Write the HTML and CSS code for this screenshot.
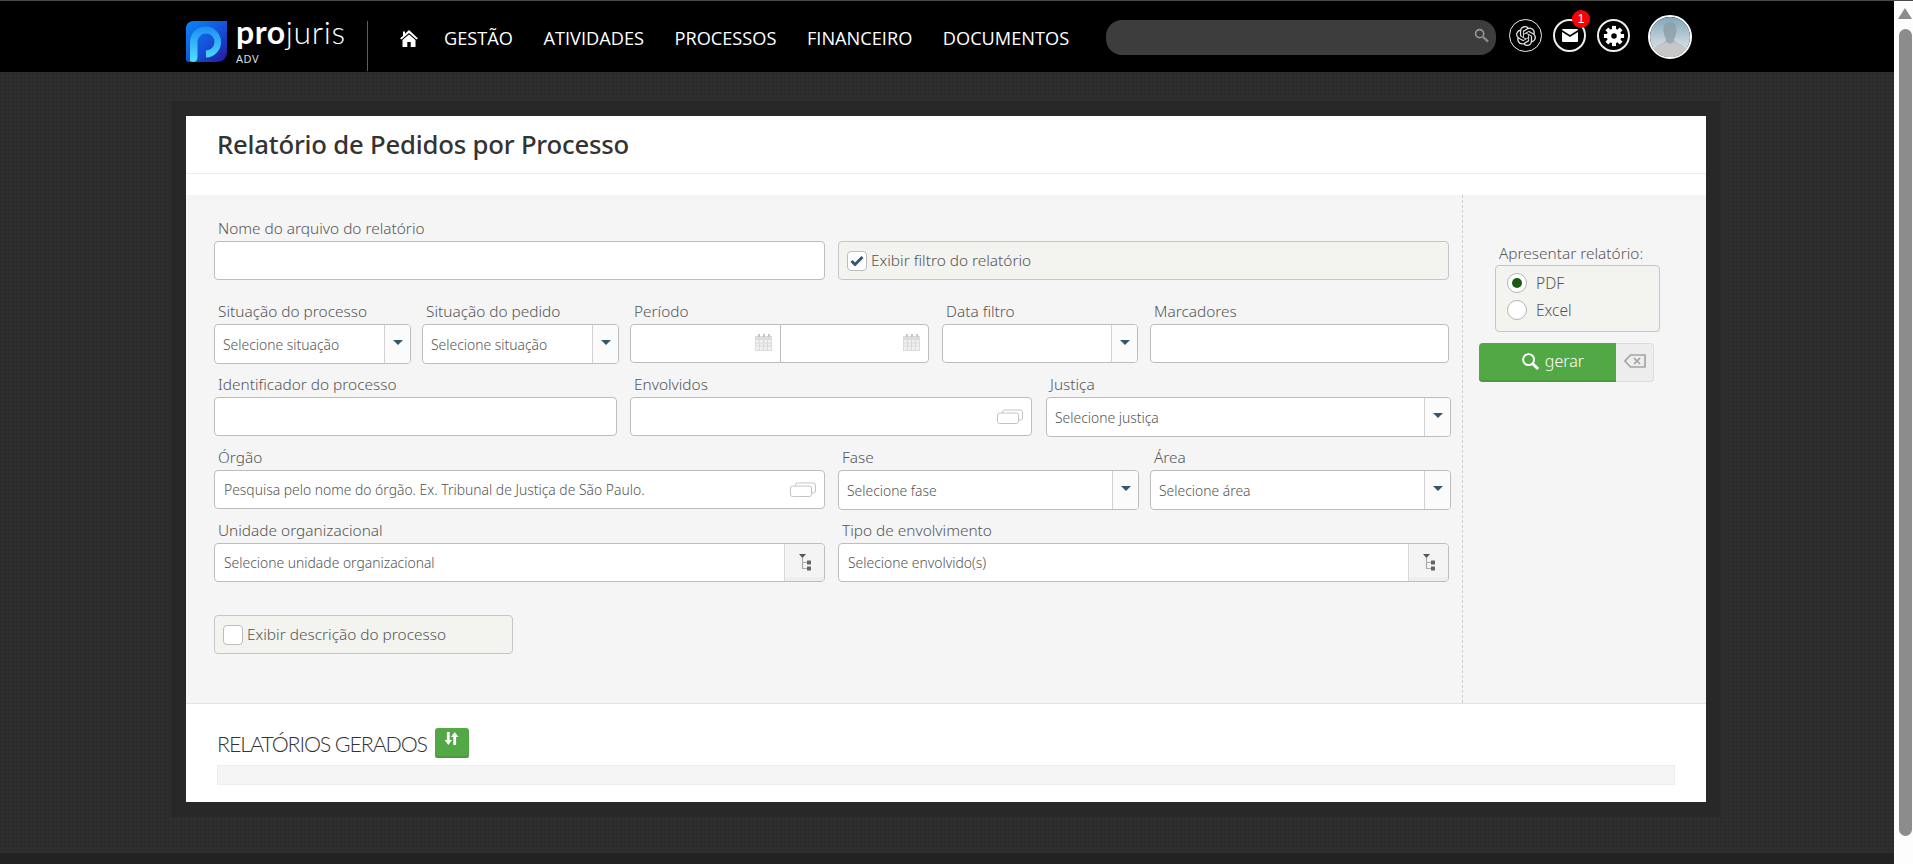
FILE: index.html
```html
<!DOCTYPE html>
<html lang="pt-BR">
<head>
<meta charset="utf-8">
<title>Relatório de Pedidos por Processo</title>
<link rel="stylesheet" href="styles.css">
</head>
<body>
<svg class="defs" width="0" height="0" aria-hidden="true">
  <defs>
    <g id="calicon">
      <rect x="0" y="2" width="17" height="15" fill="#dcdcdc"/>
      <rect x="1" y="6" width="15" height="10" fill="#f0f0f0"/>
      <path d="M1 9H16M1 12H16M4.500 6V16M8.500 6V16M12.500 6V16" stroke="#dadada" stroke-width="1"/>
      <rect x="3" y="0" width="2" height="3" fill="#c4c4c4"/><rect x="8" y="0" width="2" height="3" fill="#c4c4c4"/><rect x="13" y="0" width="2" height="3" fill="#c4c4c4"/>
    </g>
    <g id="cardsicon" fill="#fff" stroke="#c4c4c4" stroke-width="1">
      <rect x="5.500" y="1" width="20" height="10" rx="2"/>
      <rect x=".5" y="4" width="21" height="10.500" rx="2"/>
    </g>
    <g id="treeicon">
      <path d="M1 0H8L4.500 4Z" fill="#555"/>
      <path d="M4.500 4V14.500H9M4.500 8.500H9" fill="none" stroke="#aaa" stroke-width="1.200"/>
      <rect x="9" y="6.500" width="4" height="4" fill="#666"/>
      <rect x="9" y="12.500" width="4" height="4" fill="#666"/>
    </g>
  </defs>
</svg>
<div class="viewport">
  <div class="page">
    <header class="topbar">
      <a class="brand">
        <svg class="brand-mark" viewBox="0 0 41 41" width="41" height="41">
          <defs>
            <linearGradient id="lg1" x1="0" y1="0" x2="1" y2="1"><stop offset="0" stop-color="#0b86f6"/><stop offset=".55" stop-color="#1550d8"/><stop offset="1" stop-color="#2a149c"/></linearGradient>
            <linearGradient id="lg2" x1="0" y1="0" x2="0" y2="1"><stop offset="0" stop-color="#1d8cf2"/><stop offset="1" stop-color="#4fe2ff"/></linearGradient>
          </defs>
          <path d="M8 0H41V30Q41 41 30 41H3Q0 41 0 38V8Q0 0 8 0Z" fill="url(#lg1)"/>
          <path d="M4 40V21A15.500 15.500 0 1 1 20 36.500V29.500A8.500 8.500 0 1 0 11.500 21V36Q11.500 41 7 41Z" fill="url(#lg2)"/>
        </svg>
        <span class="brand-text"><span class="brand-name"><b>pro</b>juris</span><span class="brand-sub">ADV</span></span>
      </a>
      <nav class="nav">
        <svg class="home" viewBox="0 0 18 17" width="18" height="17"><path fill="#fff" d="M9 0 18 8.500 16.500 9.500 9 3 1.500 9.500 0 8.500 3 5.700V1.500H5V3.800Z"/><path fill="#fff" d="M9 4.500 15.500 10V17H10.700V12H7.300V17H2.500V10Z"/></svg>
        <a>GESTÃO</a><a>ATIVIDADES</a><a>PROCESSOS</a><a>FINANCEIRO</a><a>DOCUMENTOS</a>
      </nav>
      <div class="search">
        <svg viewBox="0 0 16 16" width="15" height="15"><circle cx="6" cy="6" r="4.300" fill="none" stroke="#9a9a9a" stroke-width="1.700"/><path d="M9.500 9.500 15 14.500" stroke="#8a8a8a" stroke-width="2.600"/></svg>
      </div>
      <div class="tools">
        <span class="tool tool-ai">
          <svg viewBox="0 0 24 24" width="20" height="20"><path fill="#e2e2e2" d="M22.2819 9.8211a5.9847 5.9847 0 0 0-.5157-4.9108 6.0462 6.0462 0 0 0-6.5098-2.9A6.0651 6.0651 0 0 0 4.9807 4.1818a5.9847 5.9847 0 0 0-3.9977 2.9 6.0462 6.0462 0 0 0 .7427 7.0966 5.98 5.98 0 0 0 .511 4.9107 6.051 6.051 0 0 0 6.5146 2.9001A5.9847 5.9847 0 0 0 13.2599 24a6.0557 6.0557 0 0 0 5.7718-4.2058 5.9894 5.9894 0 0 0 3.9977-2.9001 6.0557 6.0557 0 0 0-.7475-7.0729zm-9.022 12.6081a4.4755 4.4755 0 0 1-2.8764-1.0408l.1419-.0804 4.7783-2.7582a.7948.7948 0 0 0 .3927-.6813v-6.7369l2.02 1.1686a.071.071 0 0 1 .038.052v5.5826a4.504 4.504 0 0 1-4.4945 4.4944zm-9.6607-4.1254a4.4708 4.4708 0 0 1-.5346-3.0137l.142.0852 4.783 2.7582a.7712.7712 0 0 0 .7806 0l5.8428-3.3685v2.3324a.0804.0804 0 0 1-.0332.0615L9.74 19.9502a4.4992 4.4992 0 0 1-6.1408-1.6464zM2.3408 7.8956a4.485 4.485 0 0 1 2.3655-1.9728V11.6a.7664.7664 0 0 0 .3879.6765l5.8144 3.3543-2.0201 1.1685a.0757.0757 0 0 1-.071 0l-4.8303-2.7865A4.504 4.504 0 0 1 2.3408 7.872zm16.5963 3.8558L13.1038 8.364 15.1192 7.2a.0757.0757 0 0 1 .071 0l4.8303 2.7913a4.4944 4.4944 0 0 1-.6765 8.1042v-5.6772a.79.79 0 0 0-.407-.667zm2.0107-3.0231l-.142-.0852-4.7735-2.7818a.7759.7759 0 0 0-.7854 0L9.409 9.2297V6.8974a.0662.0662 0 0 1 .0284-.0615l4.8303-2.7866a4.4992 4.4992 0 0 1 6.6802 4.66zM8.3065 12.863l-2.02-1.1638a.0804.0804 0 0 1-.038-.0567V6.0742a4.4992 4.4992 0 0 1 7.3757-3.4537l-.142.0805L8.704 5.459a.7948.7948 0 0 0-.3927.6813zm1.0976-2.3654l2.602-1.4998 2.6069 1.4998v2.9994l-2.5974 1.4997-2.6067-1.4997Z"/></svg>
        </span>
        <span class="tool tool-mail">
          <svg viewBox="0 0 16 13" width="16" height="13"><path fill="#fff" d="M0 1Q0 0 1 0H15Q16 0 16 1L8 6 0 1Z"/><path fill="#fff" d="M0 3 8 8 16 3V12Q16 13 15 13H1Q0 13 0 12Z"/></svg>
          <span class="badge">1</span>
        </span>
        <span class="tool tool-gear">
          <svg viewBox="0 0 24 24" width="22" height="22"><circle cx="12" cy="12" r="8" fill="#fff"/><g fill="#fff"><rect x="9.800" y="1" width="4.400" height="22"/><rect x="9.800" y="1" width="4.400" height="22" transform="rotate(45 12 12)"/><rect x="9.800" y="1" width="4.400" height="22" transform="rotate(90 12 12)"/><rect x="9.800" y="1" width="4.400" height="22" transform="rotate(135 12 12)"/></g><circle cx="12" cy="12" r="3" fill="#000"/></svg>
        </span>
      </div>
      <span class="avatar">
        <svg viewBox="0 0 40 40" width="40" height="40"><defs><linearGradient id="av" x1="0" y1="0" x2="0" y2="1"><stop offset="0" stop-color="#7fa5b8"/><stop offset=".6" stop-color="#c5d3da"/><stop offset="1" stop-color="#dfe5e8"/></linearGradient></defs><rect width="40" height="40" fill="url(#av)"/><path fill="#8a9ca6" opacity=".75" d="M20 5C25 5 27 9 26.500 14 26 18 25 20 24 22.500 24 25 27 26 31 28 35 30 37 33 37 40H3C3 33 5 30 9 28 13 26 16 25 16 22.500 15 20 14 18 13.500 14 13 9 15 5 20 5Z"/><path fill="#c7c7c7" d="M16 24.500C17 27 23 27 24 24.500 25 26 27 26.500 31 28 35 30 37 33 37 40H3C3 33 5 30 9 28 13 26.500 15 26 16 24.500Z"/></svg>
      </span>
    </header>

    <main class="stage">
      <section class="card">
        <h1 class="title">Relatório de Pedidos por Processo</h1>
        <div class="spacer"></div>
        <div class="filters">
          <div class="form">
            <div class="row row-first">
              <label class="field w-611"><span class="lbl">Nome do arquivo do relatório</span><span class="ctl short"></span></label>
              <div class="field w-611 check-field"><span class="checkbar"><span class="cb"><svg viewBox="0 0 14 12" width="14" height="12"><path d="M1.500 6 5 9.500 12.500 2" fill="none" stroke="#34566e" stroke-width="3"/></svg></span>Exibir filtro do relatório</span></div>
            </div>
            <div class="row row-second">
              <label class="field w-197"><span class="lbl">Situação do processo</span><span class="ctl sel"><span class="val">Selecione situação</span><span class="caret"></span></span></label>
              <label class="field w-197"><span class="lbl">Situação do pedido</span><span class="ctl sel"><span class="val">Selecione situação</span><span class="caret"></span></span></label>
              <div class="field w-298"><span class="lbl">Período</span><span class="ctl short dates">
                <span class="date"><svg class="cal" viewBox="0 0 17 17" width="17" height="17"><use href="#calicon"/></svg></span>
                <span class="date"><svg class="cal" viewBox="0 0 17 17" width="17" height="17"><use href="#calicon"/></svg></span>
              </span></div>
              <label class="field w-195"><span class="lbl">Data filtro</span><span class="ctl short sel"><span class="val"></span><span class="caret"></span></span></label>
              <label class="field w-299"><span class="lbl">Marcadores</span><span class="ctl short"></span></label>
            </div>
            <div class="row">
              <label class="field w-403"><span class="lbl">Identificador do processo</span><span class="ctl short"></span></label>
              <div class="field w-402"><span class="lbl">Envolvidos</span><span class="ctl short cards"><svg viewBox="0 0 26 15" width="26" height="15"><use href="#cardsicon"/></svg></span></div>
              <label class="field w-405"><span class="lbl">Justiça</span><span class="ctl sel"><span class="val">Selecione justiça</span><span class="caret"></span></span></label>
            </div>
            <div class="row row-wide">
              <div class="field w-611"><span class="lbl">Órgão</span><span class="ctl short cards"><span class="val grow">Pesquisa pelo nome do órgão. Ex. Tribunal de Justiça de São Paulo.</span><svg viewBox="0 0 26 15" width="26" height="15"><use href="#cardsicon"/></svg></span></div>
              <label class="field w-300 fase"><span class="lbl">Fase</span><span class="ctl sel"><span class="val">Selecione fase</span><span class="caret"></span></span></label>
              <label class="field w-300"><span class="lbl">Área</span><span class="ctl sel"><span class="val">Selecione área</span><span class="caret"></span></span></label>
            </div>
            <div class="row row-wide">
              <div class="field w-611"><span class="lbl">Unidade organizacional</span><span class="ctl short tree"><span class="val grow">Selecione unidade organizacional</span><span class="addon"><svg viewBox="0 0 14 18" width="14" height="18"><use href="#treeicon"/></svg></span></span></div>
              <div class="field w-611"><span class="lbl">Tipo de envolvimento</span><span class="ctl short tree"><span class="val grow">Selecione envolvido(s)</span><span class="addon"><svg viewBox="0 0 14 18" width="14" height="18"><use href="#treeicon"/></svg></span></span></div>
            </div>
            <div class="row row-desc">
              <span class="checkbar desc"><span class="cb"></span>Exibir descrição do processo</span>
            </div>
          </div>
          <aside class="side">
            <span class="lbl side-lbl">Apresentar relatório:</span>
            <div class="radios">
              <span class="radio-row"><span class="radio on"></span>PDF</span>
              <span class="radio-row"><span class="radio"></span>Excel</span>
            </div>
            <div class="actions">
              <button class="go" type="button"><svg viewBox="0 0 20 20" width="19" height="19"><circle cx="8" cy="8" r="5.800" fill="none" stroke="#fff" stroke-width="2"/><path d="M12.500 12.500 18 18" stroke="#fff" stroke-width="3"/></svg>gerar</button>
              <button class="clear" type="button"><svg viewBox="0 0 22 14" width="22" height="14"><path d="M6.500 1H21V13H6.500L1 7Z" fill="none" stroke="#a4a4a4" stroke-width="1.700"/><path d="M10 4 16 10M16 4 10 10" stroke="#a4a4a4" stroke-width="1.700"/></svg></button>
            </div>
          </aside>
        </div>
        <div class="reports">
          <div class="reports-head">
            <h2>RELATÓRIOS GERADOS</h2>
            <button class="sort" type="button"><svg viewBox="0 0 14 14" width="15" height="15"><path fill="#fff" d="M2.700 1H5.300V8.500H7.500L4 13 .5 8.500H2.700Z"/><path fill="#fff" d="M8.700 13H11.300V5.500H13.500L10 1 6.500 5.500H8.700Z"/></svg></button>
          </div>
          <div class="reports-table"></div>
        </div>
      </section>
    </main>
    <footer class="foot"></footer>
  </div>
  <div class="scrollbar">
    <span class="arrow"></span>
    <span class="thumb"></span>
  </div>
</div>
</body>
</html>
```
FILE: styles.css
```css
* { box-sizing: border-box; }
html, body { margin: 0; height: 100%; overflow: hidden; }
body { font-family: "Noto Sans", "Open Sans", sans-serif; color: #555; background: #2d2d2d; }
.defs { position: absolute; top: 0; left: 0; }

.viewport { display: flex; height: 864px; width: 1913px; border-top: 1px solid #4a4a4a; }
.page {
  width: 1894px; display: flex; flex-direction: column;
  background-color: #2e2e2e;
  background-image: radial-gradient(circle at 1px 1px, #2b2b2b .7px, transparent 1px);
  background-size: 4px 4px;
}

/* top bar */
.topbar { height: 71px; background: #000; display: flex; align-items: flex-start; flex: none; color: #fff; }
.brand { display: flex; margin: 20px 0 0 186px; width: 182px; height: 50px; border-right: 1px solid #5e5e5e; }
.brand-mark { flex: none; }
.brand-text { display: flex; flex-direction: column; margin-left: 9px; }
.brand-name { font-family: "Lato", sans-serif; font-weight: 300; font-size: 32px; line-height: 30px; letter-spacing: .6px; margin-top: -4px; }
.brand-name b { font-weight: 700; }
.brand-sub { font-size: 11px; line-height: 13px; letter-spacing: .5px; color: #ddd; margin-top: 5px; }
.nav { display: flex; align-items: center; height: 30px; margin: 22px 0 0 32px; width: 706px; flex: none; }
.nav a { font-family: "Open Sans", sans-serif; font-size: 18.200px; margin-left: 30.500px; white-space: nowrap; font-weight: 400; }
.nav a:first-of-type { margin-left: 26px; }
.home { flex: none; }
.search { width: 390px; height: 35px; margin-top: 19px; background: #3d3d3d; border-radius: 16px; display: flex; align-items: center; justify-content: flex-end; padding: 0 7px 4px 0; flex: none; }
.tools { display: flex; margin: 18px 0 0 13px; gap: 11px; flex: none; }
.tool { width: 33px; height: 33px; border: 2px solid #eee; border-radius: 50%; display: flex; align-items: center; justify-content: center; position: relative; }
.tool-ai { border-width: 1.500px; }
.badge { position: absolute; top: -11px; right: -6px; width: 18px; height: 18px; border-radius: 50%; background: #f00; color: #fff; font-family: "Liberation Sans", sans-serif; font-size: 12px; line-height: 18px; text-align: center; }
.avatar { width: 44px; height: 44px; border: 2px solid #fff; border-radius: 50%; overflow: hidden; margin: 14px 0 0 18px; flex: none; }
.avatar svg { display: block; }

/* card */
.stage { flex: 1; padding-top: 44px; }
.card { width: 1520px; height: 686px; margin-left: 186px; background: #fff; box-shadow: 0 0 0 15px #282828; display: flex; flex-direction: column; }
.title { margin: 0; height: 58px; padding: 11px 0 0 31px; border-bottom: 1px solid #ececec; font-family: "Noto Sans", sans-serif; font-size: 25.700px; line-height: 36px; font-weight: 500; color: #333; letter-spacing: -.2px; }
.spacer { height: 21px; }
.filters { height: 509px; background: #f5f5f5; border-bottom: 1px solid #e3e3e3; display: flex; flex: none; }
.form { width: 1277px; padding: 25px 0 0 28px; border-right: 1px dashed #cfcfcf; }
.row { display: flex; gap: 11px; margin-top: 12px; }
.row-first { margin-top: 0; gap: 13px; }
.row-second { margin-top: 23px; }
.row-wide { gap: 13px; }
.row-desc { margin-top: 33px; }
.field { display: flex; flex-direction: column; flex: none; }
.w-611 { width: 611px; }
.w-197 { width: 197px; }
.w-298 { width: 299px; margin-right: 2px; }
.w-195 { width: 196px; margin-right: 1px; }
.w-299 { width: 299px; }
.w-403 { width: 403px; margin-right: 2px; }
.w-402 { width: 402px; margin-right: 3px; }
.w-405 { width: 405px; }
.w-300 { width: 301px; }
.fase { margin-right: -2px; }
.lbl { font-size: 15.400px; line-height: 18px; height: 21px; padding-left: 4px; font-weight: 300; color: #555; white-space: nowrap; }
.ctl { display: flex; align-items: center; height: 40px; background: #fff; border: 1px solid #bdbdbd; border-radius: 4px; overflow: hidden; }
.ctl.short { height: 39px; }
.val { flex: 1; padding-left: 8px; font-size: 13.900px; font-weight: 300; color: #555; white-space: nowrap; }
.caret { position: relative; width: 26px; height: 100%; flex: none; border-left: 1px solid #d2d2d2; background: #fbfbfb; }
.caret::after { content: ""; position: absolute; left: 8px; top: 15px; border: 5px solid transparent; border-top: 5px solid #35566f; }
.dates { padding: 0; }
.date { width: 50%; height: 100%; display: flex; align-items: center; justify-content: flex-end; padding-right: 8px; padding-bottom: 3px; }
.date + .date { border-left: 1px solid #bdbdbd; }
.cards { justify-content: flex-end; padding-right: 8px; }
.cards svg { flex: none; }
.grow { padding-left: 9px; }
.tree .addon { width: 40px; height: 100%; flex: none; border-left: 1px solid #d8d8d8; background: #f4f4f4; box-shadow: inset 0 -4px 0 #eeeeee; display: flex; align-items: center; justify-content: center; }
.check-field { justify-content: flex-end; }
.checkbar { display: flex; align-items: center; height: 39px; background: #f3f3ef; border: 1px solid #c6c6c6; border-radius: 4px; padding-left: 8px; font-size: 15.400px; font-weight: 300; color: #555; white-space: nowrap; }
.cb { width: 20px; height: 20px; background: #fff; border: 1px solid #bdbdbd; border-radius: 4px; margin-right: 4px; display: flex; align-items: center; justify-content: center; flex: none; }
.desc { width: 299px; }

/* right side */
.side { width: 243px; padding: 0 0 0 16px; flex: none; display: flex; flex-direction: column; }
.side-lbl { margin: 50px 0 -1px 17px; padding-left: 3px; }
.radios { width: 165px; height: 67px; margin-left: 16px; background: #f3f3ef; border: 1px solid #c6c6c6; border-radius: 4px; padding: 7px 0 0 11px; display: flex; flex-direction: column; gap: 7px; }
.radio-row { display: flex; align-items: center; gap: 9px; height: 20px; font-size: 15.500px; font-weight: 300; color: #555; }
.radio { width: 20px; height: 20px; border-radius: 50%; background: #fff; border: 1px solid #b5b5b5; position: relative; flex: none; }
.radio.on::after { content: ""; position: absolute; left: 4px; top: 4px; width: 10px; height: 10px; border-radius: 50%; background: #1c5a14; }
.actions { display: flex; margin-top: 11px; }
.go { width: 137px; height: 39px; border: 0; border-radius: 4px 0 0 4px; background: #52a844; color: #fff; font: 300 16px "Noto Sans", sans-serif; display: flex; align-items: center; justify-content: center; gap: 5px; box-shadow: inset 0 -2px 0 #4a9a3d; padding: 0 0 3px 10px; }
.clear { width: 38px; height: 39px; border: 1px solid #dcdcdc; border-left: 0; border-radius: 0 4px 4px 0; background: #ededed; display: flex; align-items: center; justify-content: center; padding: 0 0 4px; }

/* reports */
.reports { padding: 24px 31px 0; }
.reports-head { display: flex; align-items: center; height: 30px; gap: 8px; }
.reports h2 { margin: 0; font-family: "Lato", sans-serif; font-size: 21.500px; font-weight: 300; color: #333; letter-spacing: -1.160px; white-space: nowrap; padding-top: 2px; }
.sort { width: 34px; height: 30px; border: 0; border-radius: 3px; background: #52a844; box-shadow: inset 0 -2px 0 #4a9a3d; display: flex; justify-content: center; padding: 3px 0 0; }
.reports-table { height: 20px; margin-top: 7px; background: #f5f5f5; border: 1px solid #eee; }

.foot { height: 11px; flex: none; background: #222; }

/* scrollbar */
.scrollbar { position: relative; width: 19px; height: 863px; background: #fdfdfd; flex: none; }
.arrow { position: absolute; left: 4px; top: 7px; border: 7px solid transparent; border-top: 0; border-bottom: 11px solid #8c8c8c; }
.thumb { position: absolute; left: 5px; top: 28px; width: 13px; height: 807px; background: #8c8c8c; border-radius: 7px; }
```
